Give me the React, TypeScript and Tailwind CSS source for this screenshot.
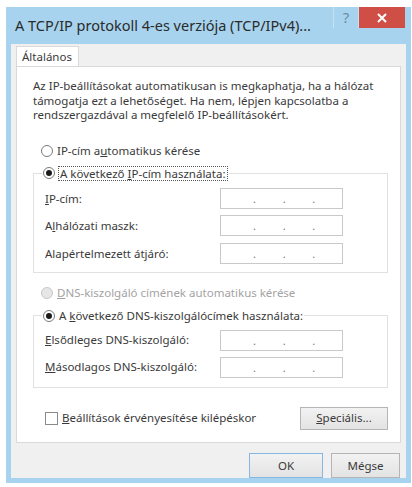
import type { ReactNode } from 'react';

const font = { fontFamily: '"Noto Sans", "Open Sans", Arial, sans-serif' };

// IPv4 address box: four empty octets separated by dots
function IpInput() {
  return (
    <div className="flex h-[21px] w-[123px] items-center border border-[#c9c9c9] bg-white pl-[32px]">
      <span className="w-[30px] text-[11px] leading-none text-[#777]">.</span>
      <span className="w-[30px] text-[11px] leading-none text-[#777]">.</span>
      <span className="w-[30px] text-[11px] leading-none text-[#777]">.</span>
    </div>
  );
}

function Radio({ checked = false, disabled = false }: { checked?: boolean; disabled?: boolean }) {
  return (
    <span
      className={`flex h-[12px] w-[12px] shrink-0 items-center justify-center rounded-full border ${
        disabled ? 'border-[#c8c8c8] bg-[#e6e6e6]' : 'border-[#7a7a7a] bg-white'
      }`}
    >
      {checked && <span className="h-[6px] w-[6px] rounded-full bg-[#1b1b1b]" />}
    </span>
  );
}

function Field({ label, top }: { label: ReactNode; top: string }) {
  return (
    <div className={`flex items-center ${top}`}>
      <span className="w-[175px] text-[#3a3a3a]">{label}</span>
      <IpInput />
    </div>
  );
}

function Button({ children, primary = false, className = '' }: { children: ReactNode; primary?: boolean; className?: string }) {
  return (
    <button
      className={`flex items-center justify-center border bg-gradient-to-b from-[#f2f2f2] to-[#e3e3e3] text-[11.5px] text-[#3a3a3a] ${
        primary ? 'border-[#86b7e3]' : 'border-[#b5b5b5]'
      } ${className}`}
    >
      {children}
    </button>
  );
}

export default function App() {
  return (
    <div className="h-[487px] w-[412px] overflow-hidden bg-white pl-[6px] pt-[7px]" style={font}>
      <div className="flex h-[476px] w-[405px] flex-col bg-[#a7d3ee]">
        {/* title bar */}
        <div className="flex h-[37px] items-start">
          <span className="mt-[11px] flex-1 whitespace-nowrap pl-[9px] text-[14.5px] leading-none text-[#2b2b2b]">
            A TCP/IP protokoll 4-es verziója (TCP/IPv4)...
          </span>
          <span className="flex h-[21px] w-[26px] items-center justify-center border-x border-[#c4e2f3] text-[15px] leading-none text-[#6b8ea3]">
            ?
          </span>
          <span className="mr-[6px] flex h-[21px] w-[46px] items-center justify-center bg-[#cf4f47]">
            <svg width="10" height="10" viewBox="0 0 10 10" aria-hidden="true">
              <path d="M1 1l8 8M9 1l-8 8" stroke="#fff" strokeWidth="2" />
            </svg>
          </span>
        </div>

        {/* client area */}
        <div className="mx-[5px] mb-[5px] flex flex-1 flex-col bg-[#f0f0f0] px-[5px] text-[11.5px] leading-none">
          <div className="mt-[2px] flex">
            <div className="-mb-px flex h-[21px] w-[63px] items-center border border-b-0 border-[#d9d9d9] bg-white pl-[5px] text-[#3a3a3a]">
              Általános
            </div>
          </div>

          <div className="flex h-[377px] flex-col border border-[#d9d9d9] bg-white pl-[16px] pr-[12px]">
            <p className="mt-[12px] leading-[14.5px] text-[#3a3a3a]">
              Az IP-beállításokat automatikusan is megkaphatja, ha a hálózat támogatja ezt a lehetőséget. Ha nem, lépjen kapcsolatba a
              rendszergazdával a megfelelő IP-beállításokért.
            </p>

            <label className="mt-[22px] flex items-center gap-[4px] pl-[8px] text-[#3a3a3a]">
              <Radio />
              <span>
                IP-cím a<u>u</u>tomatikus kérése
              </span>
            </label>

            <fieldset className="mt-[9px] h-[107px] border border-[#e1e1e1] px-[11px]">
              <legend className="-ml-[3px] flex items-center gap-[3px] px-[1px] text-[#3a3a3a]">
                <Radio checked />
                <span className="border border-dotted border-[#555] px-[1px] py-[1px]">
                  A következő <u>I</u>P-cím használata:
                </span>
              </legend>
              <Field label={<><u>I</u>P-cím:</>} top="mt-[7px]" />
              <Field label={<>A<u>l</u>hálózati maszk:</>} top="mt-[6px]" />
              <Field label="Alapértelmezett átjáró:" top="mt-[7px]" />
            </fieldset>

            <label className="mt-[14px] flex items-center gap-[4px] pl-[8px] text-[#a3a3a3]">
              <Radio disabled />
              <span>
                <u>D</u>NS-kiszolgáló címének automatikus kérése
              </span>
            </label>

            <fieldset className="mt-[9px] h-[80px] border border-[#e1e1e1] px-[11px]">
              <legend className="-ml-[3px] flex items-center gap-[4px] px-[1px] py-[2px] text-[#3a3a3a]">
                <Radio checked />
                <span>
                  A <u>k</u>övetkező DNS-kiszolgálócímek használata:
                </span>
              </legend>
              <Field label={<><u>E</u>lsődleges DNS-kiszolgáló:</>} top="mt-[6px]" />
              <Field label={<><u>M</u>ásodlagos DNS-kiszolgáló:</>} top="mt-[6px]" />
            </fieldset>

            <div className="mt-[19px] flex items-center pl-[12px] pr-[0px]">
              <span className="h-[13px] w-[13px] border border-[#8a8a8a] bg-white" />
              <span className="ml-[4px] flex-1 text-[#3a3a3a]">
                <u>B</u>eállítások érvényesítése kilépéskor
              </span>
              <Button className="h-[23px] w-[88px]">
                <span>
                  <u>S</u>peciális...
                </span>
              </Button>
            </div>
          </div>

          <div className="mt-[10px] flex justify-end gap-[8px] pr-[1px]">
            <Button primary className="h-[25px] w-[74px]">
              OK
            </Button>
            <Button className="h-[25px] w-[69px]">Mégse</Button>
          </div>
        </div>
      </div>
    </div>
  );
}
